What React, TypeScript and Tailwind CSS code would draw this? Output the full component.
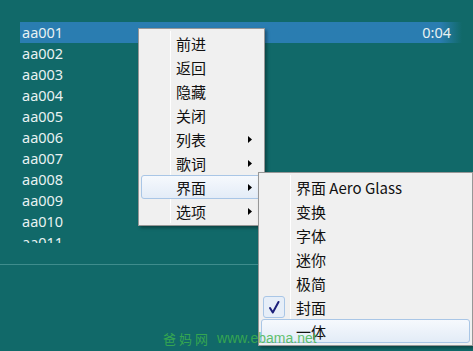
const songs = ['aa001', 'aa002', 'aa003', 'aa004', 'aa005', 'aa006', 'aa007', 'aa008', 'aa009', 'aa010', 'aa011'];

const mainItems = [
  { label: '前进' },
  { label: '返回' },
  { label: '隐藏' },
  { label: '关闭' },
  { label: '列表', sub: true },
  { label: '歌词', sub: true },
  { label: '界面', sub: true, active: true },
  { label: '选项', sub: true },
];

const subItems = [
  { label: '界面 Aero Glass' },
  { label: '变换' },
  { label: '字体' },
  { label: '迷你' },
  { label: '极简' },
  { label: '封面', checked: true },
  { label: '一体', active: true },
];

const cjk = { fontFamily: "'Noto Sans CJK SC', 'Noto Sans', sans-serif" };

function Arrow() {
  return (
    <svg width="4" height="7" viewBox="0 0 4 7" className="absolute right-[9px] top-[8px]">
      <path d="M0 0 L4 3.5 L0 7 Z" fill="#000" />
    </svg>
  );
}

function Check() {
  return (
    <svg width="14" height="15" viewBox="0 0 14 15">
      <path d="M3 8 L5.8 12.5 L11.5 2" fill="none" stroke="#1b1f7a" strokeWidth="2" strokeLinecap="round" strokeLinejoin="round" />
    </svg>
  );
}

function MenuItem({ label, sub, active, checked }: { label: string; sub?: boolean; active?: boolean; checked?: boolean }) {
  return (
    <div
      className={
        'relative h-[24px] flex items-center mx-[2px] rounded-[3px] border ' +
        (active
          ? 'border-[#a9c6e6] bg-gradient-to-b from-[#f6f9fd] to-[#e3ecf7]'
          : 'border-transparent')
      }
    >
      <div className="w-[30px] shrink-0 flex items-center justify-center">
        {checked && (
          <div className="w-[22px] h-[22px] -ml-[6px] rounded-[3px] border border-[#a9c6e6] bg-[#e6eef8] flex items-center justify-center">
            <Check />
          </div>
        )}
      </div>
      <span className="pl-[4px] text-[15px] leading-none text-[#111]" style={cjk}>{label}</span>
      {sub && <Arrow />}
    </div>
  );
}

export default function App() {
  return (
    <div className="relative w-[473px] h-[351px] overflow-hidden bg-[#116969]" style={{ fontFamily: "'Noto Sans', sans-serif" }}>
      <div className="pt-[22px] pl-[20px] pr-[11px] h-[243px] overflow-hidden">
        {songs.map((s, i) => (
          <div
            key={s}
            className={
              'h-[21px] flex items-center justify-between pl-[2px] pr-[11px] text-[14.5px] text-[#e8f2f2] ' +
              (i === 0 ? 'bg-gradient-to-r from-[#2a7db1] from-[95%] to-[#116969]' : '')
            }
          >
            <span>{s}</span>
            {i === 0 && <span>0:04</span>}
          </div>
        ))}
      </div>
      <div className="mt-[21px] h-px bg-[#3f8d8d]" />

      {/* context menu */}
      <div className="absolute left-[138px] top-[28px] w-[127px] py-[2px] bg-[#f0f0f0] border border-[#979797] shadow-[2px_2px_3px_rgba(0,0,0,0.35)]">
        <div className="absolute left-[31px] top-[2px] bottom-[2px] w-px bg-[#e2e3e3] border-r border-white" />
        {mainItems.map((m) => (
          <MenuItem key={m.label} {...m} />
        ))}
      </div>

      {/* submenu */}
      <div className="absolute left-[258px] top-[172px] w-[215px] py-[2px] bg-[#f0f0f0] border border-[#979797] shadow-[2px_2px_3px_rgba(0,0,0,0.35)]">
        <div className="absolute left-[31px] top-[2px] bottom-[2px] w-px bg-[#e2e3e3] border-r border-white" />
        {subItems.map((m) => (
          <MenuItem key={m.label} {...m} />
        ))}
      </div>

      {/* watermark */}
      <div className="absolute left-[163px] top-[328px] flex items-center gap-[6px] text-[#3fb54c] opacity-80 whitespace-nowrap">
        <span className="text-[13px] tracking-[3px]" style={cjk}>爸妈网</span>
        <span className="text-[14px]" style={{ fontFamily: "'Liberation Sans', sans-serif" }}>www.ebama.net</span>
      </div>
    </div>
  );
}
